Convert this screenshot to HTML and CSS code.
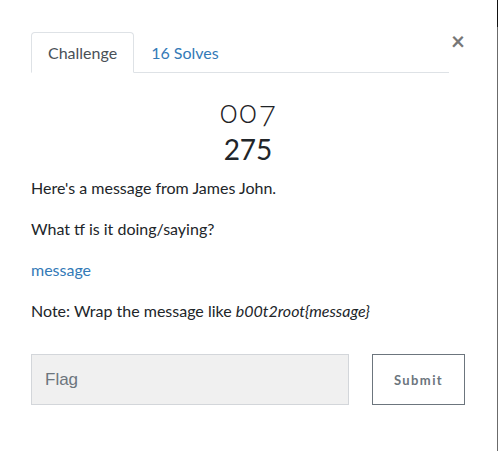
FILE: index.html
```html
<!DOCTYPE html>
<html>
<head>
<meta charset="utf-8">
<link rel="stylesheet" href="styles.css">
</head>
<body>
<div class="frame">
  <div class="modal">
    <div class="tabs-row">
      <ul class="tabs">
        <li class="tab active">Challenge</li>
        <li class="tab link">16 Solves</li>
      </ul>
      <button class="close" aria-label="Close">&times;</button>
    </div>
    <h3 class="title">007</h3>
    <h3 class="value">275</h3>
    <div class="desc">
      <p>Here's a message from James John.</p>
      <p>What tf is it doing/saying?</p>
      <p><a class="msg-link" href="#">message</a></p>
      <p>Note: Wrap the message like <em>b00t2root{message}</em></p>
    </div>
    <div class="submit-row">
      <input class="flag" type="text" placeholder="Flag">
      <button class="submit">Submit</button>
    </div>
  </div>
</div>
</body>
</html>
```
FILE: styles.css
```css
html, body {
  margin: 0;
  padding: 0;
  background: #fff;
}
body {
  font-family: Lato, "Open Sans", sans-serif;
  font-size: 16px;
  line-height: 1.5;
  color: #212529;
}
.frame {
  width: 497px;
  height: 451px;
  border-right: 1px solid #6b6b6b;
  box-sizing: content-box;
  position: relative;
}
.frame::after {
  content: "";
  position: absolute;
  right: -1px;
  top: 0;
  width: 1px;
  height: 27px;
  background: #111;
}
.modal {
  padding: 32px 32px 0 31px;
}
.tabs-row {
  display: flex;
  align-items: flex-start;
}
.tabs {
  list-style: none;
  margin: 0;
  padding: 0;
  display: flex;
  flex: 1;
  border-bottom: 1px solid #dee2e6;
}
.tab {
  padding: 8px 16px 7px;
  border: 1px solid transparent;
  border-top-left-radius: 4px;
  border-top-right-radius: 4px;
  margin-bottom: -1px;
}
.tab.active {
  color: #495057;
  border-color: #dee2e6 #dee2e6 #fff;
  background: #fff;
}
.tab.link {
  color: #337ab7;
}
.close {
  background: none;
  border: 0;
  padding: 0;
  margin: -3px 0 0 2px;
  width: 14px;
  font-family: Lato, sans-serif;
  font-size: 24px;
  font-weight: 700;
  line-height: 1;
  color: #777;
  cursor: pointer;
}
.title, .value {
  margin: 0;
  text-align: center;
  font-size: 28px;
  font-weight: 400;
  line-height: 1.2;
}
.title {
  margin-top: 21px;
  font-variant-numeric: oldstyle-nums;
  font-feature-settings: "onum" 1;
  font-size: 32px;
  font-weight: 300;
  letter-spacing: 2px;
  padding-left: 2px;
  line-height: 1.05;
  color: #1f2326;
}
.value {
  margin-top: 5px;
}
.desc {
  margin-top: 10px;
}
.desc p {
  margin: 0 0 17px;
}
.desc p:last-child {
  margin-bottom: 16px;
}
.msg-link {
  color: #337ab7;
  text-decoration: none;
}
.submit-row {
  display: flex;
  margin-top: 31px;
  width: 434px;
}
.flag {
  width: 318px;
  height: 51px;
  box-sizing: border-box;
  background: #f0f0f0;
  border: 1px solid #d3d6da;
  padding: 0 13px;
  font-family: "Liberation Sans", Arial, sans-serif;
  font-size: 17px;
  color: #495057;
  outline: none;
}
.flag::placeholder {
  color: #6c757d;
}
.submit {
  margin-left: 23px;
  width: 93px;
  height: 51px;
  box-sizing: border-box;
  background: #fff;
  border: 1px solid #6c757d;
  font-family: Lato, sans-serif;
  font-size: 13px;
  font-weight: 700;
  letter-spacing: 1.4px;
  color: #6c757d;
  cursor: pointer;
}
```
